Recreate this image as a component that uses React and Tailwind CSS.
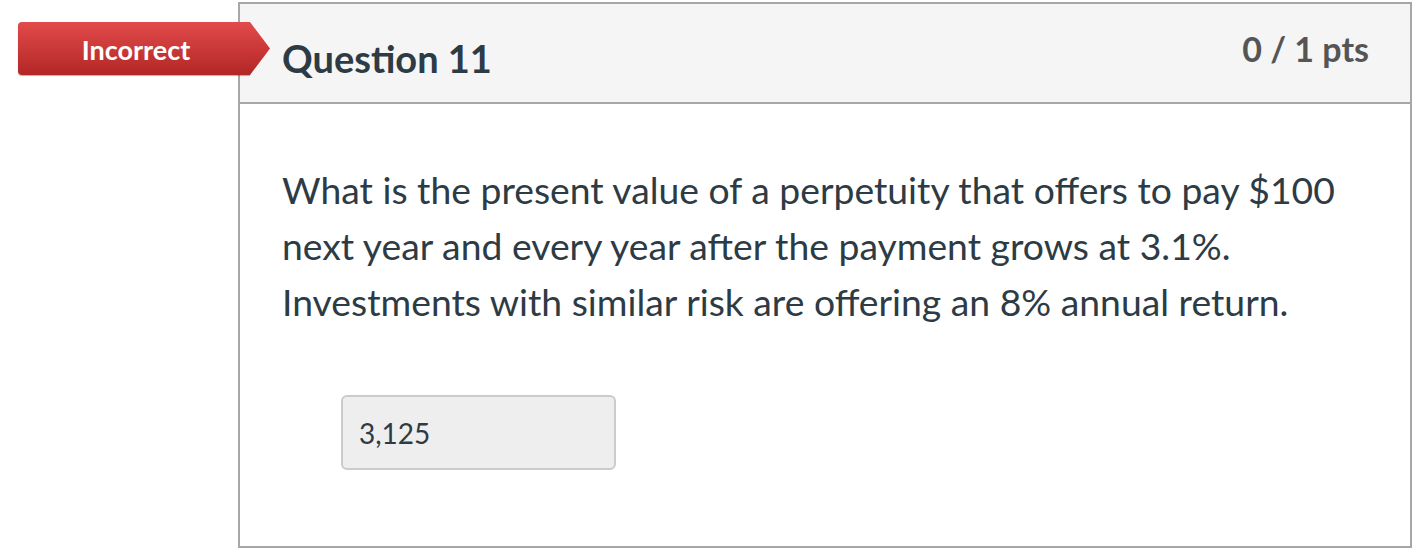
export default function App() {
  return (
    <div className="w-[1418px] h-[560px] bg-white relative" style={{ fontFamily: "Lato, 'Noto Sans', sans-serif" }}>
      <div className="absolute left-[18px] top-[22px] flex h-[53px] z-10">
        <div className="w-[232px] h-[53px] rounded-l-[4px] bg-gradient-to-b from-[#e24a4a] to-[#b32626] flex items-center justify-center text-white text-[27px] font-bold pt-[3px] pl-[4px] shadow-[0_1px_1px_rgba(0,0,0,0.3)]">
          Incorrect
        </div>
        <svg width="20" height="53" viewBox="0 0 20 53" className="block">
          <defs>
            <linearGradient id="rg" x1="0" y1="0" x2="0" y2="1">
              <stop offset="0" stopColor="#e24a4a" />
              <stop offset="1" stopColor="#b32626" />
            </linearGradient>
          </defs>
          <polygon points="0,0 20,26.5 0,53" fill="url(#rg)" />
        </svg>
      </div>
      <div className="absolute left-[238px] top-[2px] w-[1174px] h-[546px] border-2 border-[#a7a7a7] flex flex-col">
        <div className="h-[100px] bg-[#f5f5f5] border-b-2 border-[#a7a7a7] flex justify-between pl-[42px] pr-[41px]">
          <div className="pt-[30px] text-[38px] font-bold text-[#2d3b45] leading-[48px]">Question 11</div>
          <div className="pt-[23px] text-[34px] font-bold text-[#555555] leading-[44px]">0 / 1 pts</div>
        </div>
        <div className="pl-[42px] pr-[40px] pt-[58px]">
          <p className="text-[37.3px] leading-[56px] text-[#2d3b45]">
            What is the present value of a perpetuity that offers to pay $100 next year and every year after the payment grows at 3.1%. Investments with similar risk are offering an 8% annual return.
          </p>
          <div className="ml-[59px] mt-[65px] w-[275px] h-[75px] bg-[#eeeeee] border-2 border-[#c8cccf] rounded-[6px] flex items-center pl-[16px] text-[28px] text-[#2d3b45]">
            3,125
          </div>
        </div>
      </div>
    </div>
  );
}
